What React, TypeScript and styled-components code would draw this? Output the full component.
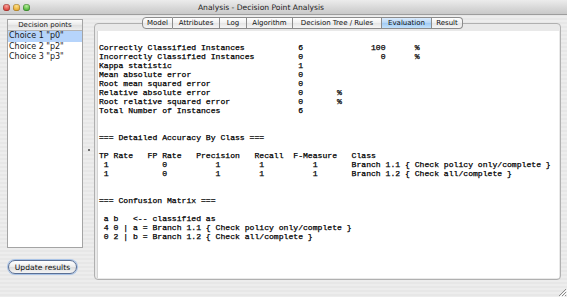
import React from 'react';
import styled, { createGlobalStyle } from 'styled-components';

const GlobalStyle = createGlobalStyle`
  html, body {
    margin: 0;
    padding: 0;
    overflow: hidden;
  }
  * {
    box-sizing: border-box;
  }
`;

// lay a line out on fixed character columns, as the text area shows it
const cols = (...cells: [number, string][]) =>
  cells.reduce((line, [col, s]) => line.padEnd(col) + s, '');

const OUTPUT = [
  cols([0, 'Correctly Classified Instances'], [41, '6'], [56, '100'], [65, '%']),
  cols([0, 'Incorrectly Classified Instances'], [41, '0'], [58, '0'], [65, '%']),
  cols([0, 'Kappa statistic'], [41, '1']),
  cols([0, 'Mean absolute error'], [41, '0']),
  cols([0, 'Root mean squared error'], [41, '0']),
  cols([0, 'Relative absolute error'], [41, '0'], [49, '%']),
  cols([0, 'Root relative squared error'], [41, '0'], [49, '%']),
  cols([0, 'Total Number of Instances'], [41, '6']),
  '',
  '',
  '=== Detailed Accuracy By Class ===',
  '',
  'TP Rate   FP Rate   Precision   Recall  F-Measure   Class',
  cols([1, '1'], [13, '0'], [24, '1'], [33, '1'], [44, '1'], [52, 'Branch 1.1 { Check policy only/complete }']),
  cols([1, '1'], [13, '0'], [24, '1'], [33, '1'], [44, '1'], [52, 'Branch 1.2 { Check all/complete }']),
  '',
  '',
  '=== Confusion Matrix ===',
  '',
  ' a b   <-- classified as',
  ' 4 0 | a = Branch 1.1 { Check policy only/complete }',
  ' 0 2 | b = Branch 1.2 { Check all/complete }',
].join('\n');

const CHOICES = ['Choice 1 "p0"', 'Choice 2 "p2"', 'Choice 3 "p3"'];

const TABS = [
  { label: 'Model', width: 31 },
  { label: 'Attributes', width: 47 },
  { label: 'Log', width: 27 },
  { label: 'Algorithm', width: 46 },
  { label: 'Decision Tree / Rules', width: 89 },
  { label: 'Evaluation', width: 50 },
  { label: 'Result', width: 31 },
];

const LIGHTS = [
  { top: '#f7a39d', bottom: '#d8352d' },
  { top: '#fbe08c', bottom: '#e6a524' },
  { top: '#b8ec9c', bottom: '#3fae2c' },
];

const GrowBoxIcon: React.FC = () => (
  <svg width="10" height="10" viewBox="0 0 10 10">
    <path d="M9 2 L2 9 M9 5 L5 9 M9 8 L8 9" stroke="#8a8a8a" strokeWidth="1" />
    <path d="M10 3 L3 10 M10 6 L6 10" stroke="#ffffff" strokeWidth="1" />
  </svg>
);

export default function App() {
  return (
    <>
      <GlobalStyle />
      <Window>
        <TitleBar>
          <Lights>
            {LIGHTS.map((l, i) => (
              <Light key={i} top={l.top} bottom={l.bottom} />
            ))}
          </Lights>
          <Title>Analysis - Decision Point Analysis</Title>
        </TitleBar>

        <Body>
          <Sidebar>
            <ListBox>
              <ListHeader>Decision points</ListHeader>
              {CHOICES.map((c, i) => (
                <ListItem key={c} selected={i === 0}>{c}</ListItem>
              ))}
            </ListBox>
            <UpdateButton>Update results</UpdateButton>
          </Sidebar>

          <Divider>
            <Grip />
          </Divider>

          <TabArea>
            <TabRow>
              {TABS.map((t, i) => (
                <Tab
                  key={t.label}
                  w={t.width}
                  active={t.label === 'Evaluation'}
                  first={i === 0}
                  last={i === TABS.length - 1}
                >
                  {t.label}
                </Tab>
              ))}
            </TabRow>
            <TabPane>
              <Output>{OUTPUT}</Output>
            </TabPane>
          </TabArea>
        </Body>

        <GrowBox>
          <GrowBoxIcon />
        </GrowBox>
      </Window>
    </>
  );
}

const Window = styled.div`
  position: relative;
  width: 567px;
  height: 297px;
  display: flex;
  flex-direction: column;
  overflow: hidden;
  font-family: 'DejaVu Sans', 'Liberation Sans', sans-serif;
  color: #1a1a1a;
  background: repeating-linear-gradient(#ededed 0 2px, #e7e7e7 2px 4px);
`;

const TitleBar = styled.div`
  height: 15px;
  flex: none;
  display: flex;
  align-items: center;
  padding: 0 0 0 3px;
  background: linear-gradient(#ececec, #d6d6d6 60%, #c9c9c9);
  border-bottom: 1px solid #9d9d9d;
`;

const Lights = styled.div`
  display: flex;
  gap: 3px;
  width: 60px;
`;

const Light = styled.span<{ top: string; bottom: string }>`
  width: 7px;
  height: 7px;
  border-radius: 50%;
  background: radial-gradient(circle at 50% 30%, ${({ top }) => top}, ${({ bottom }) => bottom} 75%);
  box-shadow: inset 0 0 0 0.5px rgba(0, 0, 0, 0.35);
`;

const Title = styled.div`
  flex: 1;
  text-align: center;
  padding-right: 108px;
  font-size: 7.6px;
  color: #222;
`;

const Body = styled.div`
  flex: 1;
  display: flex;
  min-height: 0;
`;

const Sidebar = styled.div`
  width: 84px;
  flex: none;
  display: flex;
  flex-direction: column;
  padding: 4px 0 0 7px;
`;

const ListBox = styled.div`
  width: 76px;
  height: 229px;
  background: #fff;
  border: 1px solid #a4a4a4;
  box-shadow: inset 0 1px 0 #d8d8d8;
`;

const ListHeader = styled.div`
  height: 11px;
  display: flex;
  align-items: center;
  justify-content: center;
  font-size: 7px;
  background: linear-gradient(#fdfdfd, #e9e9e9 50%, #dedede 50%, #efefef);
  border-bottom: 1px solid #b4b4b4;
`;

const ListItem = styled.div<{ selected?: boolean }>`
  height: 10.5px;
  line-height: 10.5px;
  padding-left: 1px;
  font-size: 8px;
  white-space: nowrap;
  background: ${({ selected }) => (selected ? '#b6d4fb' : 'transparent')};
`;

const UpdateButton = styled.button`
  margin: 12px 0 0 1px;
  width: 69px;
  height: 14px;
  padding: 0;
  border-radius: 7px;
  border: 1px solid #5a6f94;
  box-shadow: 0 0 0 1px #a9c3e6;
  background: linear-gradient(#ffffff, #ececec 50%, #dcdcdc 50%, #f4f4f4);
  font-family: inherit;
  font-size: 7.6px;
  color: #111;
`;

const Divider = styled.div`
  width: 10px;
  flex: none;
  display: flex;
  align-items: center;
  justify-content: center;
  padding-bottom: 12px;
`;

const Grip = styled.span`
  width: 2px;
  height: 2px;
  border-radius: 50%;
  background: #444;
`;

const TabArea = styled.div`
  width: 467px;
  flex: none;
  display: flex;
  flex-direction: column;
  padding-top: 2px;
`;

const TabRow = styled.div`
  display: flex;
  margin: 0 0 -6px 48px;
  position: relative;
  z-index: 1;
`;

const Tab = styled.div<{ w: number; active?: boolean; first?: boolean; last?: boolean }>`
  width: ${({ w }) => w}px;
  height: 12px;
  display: flex;
  align-items: center;
  justify-content: center;
  font-size: 7px;
  white-space: nowrap;
  color: #111;
  border: 1px solid #8c8c8c;
  border-left-width: ${({ first }) => (first ? 1 : 0)}px;
  border-radius: ${({ first, last }) => (first ? '4px 0 0 4px' : last ? '0 4px 4px 0' : '0')};
  background: ${({ active }) =>
    active
      ? 'linear-gradient(#dcecfd, #b5d6f6 50%, #9ec9f3 50%, #c4e2fb)'
      : 'linear-gradient(#ffffff, #f0f0f0 50%, #e4e4e4 50%, #f6f6f6)'};
`;

const TabPane = styled.div`
  height: 257px;
  display: flex;
  padding: 7px 1px 1px 2px;
  border: 1px solid #b0b0b0;
  border-radius: 4px;
  background: #e9e9e9;
`;

const Output = styled.pre`
  flex: 1;
  margin: 0;
  padding: 12px 0 0 1px;
  background: #fff;
  border-left: 1px solid #d4d4d4;
  font-family: 'Liberation Mono', 'DejaVu Sans Mono', monospace;
  font-size: 8.1px;
  line-height: 9px;
  color: #000;
  -webkit-text-stroke: 0.25px #000;
  white-space: pre;
  overflow: hidden;
`;

const GrowBox = styled.div`
  position: absolute;
  right: 0;
  bottom: 0;
  width: 10px;
  height: 10px;
  display: flex;
`;
